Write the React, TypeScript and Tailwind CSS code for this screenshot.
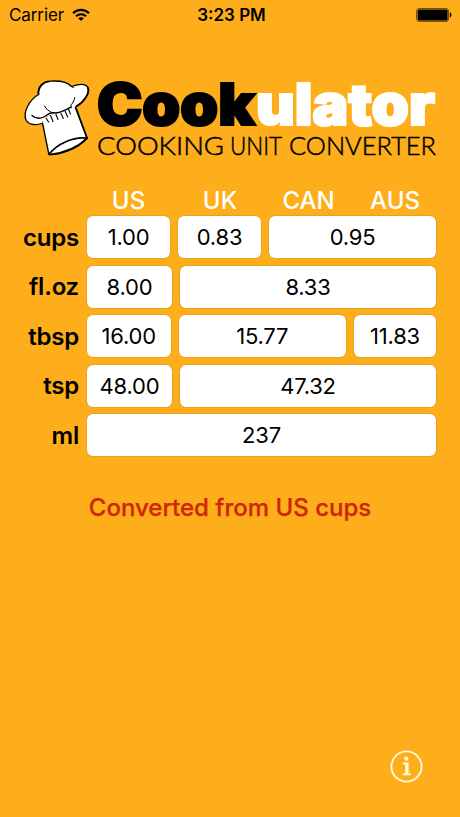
import React from "react";

type Cell = { value: string; width: string };
type Row = { label: string; cells: Cell[] };

const rows: Row[] = [
  {
    label: "cups",
    cells: [
      { value: "1.00", width: "w-[83px]" },
      { value: "0.83", width: "w-[83px]" },
      { value: "0.95", width: "flex-1" },
    ],
  },
  {
    label: "fl.oz",
    cells: [
      { value: "8.00", width: "w-[85px]" },
      { value: "8.33", width: "flex-1" },
    ],
  },
  {
    label: "tbsp",
    cells: [
      { value: "16.00", width: "w-[83.5px]" },
      { value: "15.77", width: "flex-1" },
      { value: "11.83", width: "w-[82px]" },
    ],
  },
  {
    label: "tsp",
    cells: [
      { value: "48.00", width: "w-[85px]" },
      { value: "47.32", width: "flex-1" },
    ],
  },
  {
    label: "ml",
    cells: [{ value: "237", width: "flex-1" }],
  },
];

function StatusBar() {
  return (
    <header className="grid h-[30px] grid-cols-3 items-center pl-[9px] pr-[8px] text-[17px] leading-[30px]">
      <div className="flex items-center gap-[8px]">
        <span className="tracking-[-0.1px]">Carrier</span>
        <svg width="18" height="14" viewBox="0 0 18 14" fill="none" stroke="#000" strokeWidth="2.1">
          <path d="M1 5.2C5.5.7 12.5.7 17 5.2" />
          <path d="M4 8.3c2.8-2.8 7.2-2.8 10 0" />
          <path d="M9 13 6.2 10.3c1.5-1.5 4.1-1.5 5.6 0Z" fill="#000" stroke="none" />
        </svg>
      </div>
      <span className="pl-[2px] text-center font-semibold">3:23 PM</span>
      <svg className="justify-self-end" width="36" height="14" viewBox="0 0 36 14">
        <rect x="0.6" y="0.6" width="32" height="12.8" rx="2.6" fill="none" stroke="#000" strokeOpacity=".6" />
        <rect x="1.6" y="1.6" width="30" height="10.8" rx="1.5" />
        <path d="M33.8 4.6c2.2.6 2.2 4.2 0 4.8Z" />
      </svg>
    </header>
  );
}

function Logo() {
  return (
    <svg className="block" width="460" height="95" viewBox="0 70 460 95" role="img" aria-label="Cookulator">
      <g strokeLinecap="round" strokeLinejoin="round" stroke="#000" fill="none">
        <path d="M41.5 118 48.9 154.5C60 155 76 150 87 138.2L74.5 105Z" fill="#fff" strokeWidth="1.3" />
        <path
          d="M42 123.5C36 125.5 29 125 26.2 120.5C22.5 113 29 100 38.5 94.5C37 87 43 81.5 50 81.2C58 80.6 67 81.5 71.5 86.5C77 84.5 84 82.5 87.3 86.5C91 92 84.5 102 75.5 106.5C70 111 62 115 53 114.5C48 115.5 43.5 118 42 123.5Z"
          fill="#fff"
          stroke="none"
        />
        <path d="M42 123.5C36 125.5 29 125 26.2 120.5C22.5 113 29 100 38.5 94.5C37 87 43 81.5 50 81.2C58 80.6 67 81.5 71.5 86.5C77 84.5 84 82.5 87.3 86.5C91 92 84.5 102 76.5 106.5" strokeWidth="1.3" />
        <path d="M87.8 87.5C90.3 93 84 101.5 76.5 106.3M49 81.5C43 82 38 87 38.5 94" strokeWidth="1.7" />
        <path d="M32 115.5C36 119 41 119 45.5 116C48 114 50 112.5 53.5 112.8C60 114 66 109 71.5 107" strokeWidth="1.5" />
        <path d="M44.500 106C46 109 49 111.500 53 113M74.800 97.500C74 101 72.500 103.500 70.500 106M71.500 86.500L73.500 87.500" strokeWidth="1" />
        <path d="m46 118 2.600 4M50.500 115.500l2.500 6M56 114.500l2 5M61 113.500l2.300 5M65 111l2.700 6M68.500 109l2 5" strokeWidth="1.100" />
        <path d="M49.500 153.800C57 144 73 136.500 87 138.200" strokeWidth="1.700" />
        <path d="M76 108 87.200 138.200C77 148 64 153 50 154.500" strokeWidth="1.600" />
      </g>
      <g className="font-[Inter] font-black" fontSize="57.5" strokeLinejoin="miter">
        <text x="97" y="125.2" textLength="158" lengthAdjust="spacingAndGlyphs" stroke="#000" strokeWidth="2.2">Cook</text>
        <text x="256" y="125.2" textLength="179" lengthAdjust="spacingAndGlyphs" fill="#fff" stroke="#fff" strokeWidth="2.2">ulator</text>
      </g>
      <g className="font-[Lato] font-light" fontSize="25.5" stroke="#000" strokeWidth="0.5">
        <text x="97" y="155" textLength="127" lengthAdjust="spacingAndGlyphs">COOKING</text>
        <text x="230" y="155" textLength="52" lengthAdjust="spacingAndGlyphs">UNIT</text>
        <text x="289" y="155" textLength="147" lengthAdjust="spacingAndGlyphs">CONVERTER</text>
      </g>
    </svg>
  );
}

export default function App() {
  return (
    <main className="flex h-[817px] w-[460px] flex-col overflow-hidden bg-[#fdae1a] font-[Inter,sans-serif] text-black">
      <StatusBar />
      <div className="h-10" />
      <Logo />
      <section className="mt-[21px] pl-[10px] pr-[24px]">
        <div className="grid h-[30px] grid-cols-[83px_100px_77px_96px] pl-[77px] text-center text-[24px] font-medium leading-[30px] text-white">
          <span>US</span>
          <span>UK</span>
          <span>CAN</span>
          <span>AUS</span>
        </div>
        <div className="flex flex-col gap-[7.5px]">
          {rows.map((row) => (
            <div key={row.label} className="flex h-[42px] items-center">
              <span className="w-[69px] pt-px text-right text-[24px] font-semibold leading-[42px] tracking-[-0.2px]">
                {row.label}
              </span>
              <div className="ml-2 flex h-full flex-1 gap-2">
                {row.cells.map((cell) => (
                  <div
                    key={cell.value}
                    className={`flex items-center justify-center rounded-[6px] bg-white pt-px text-[22px] tracking-[-0.2px] shadow-[0_0_0_0.5px_rgba(160,130,70,0.5)] ${cell.width}`}
                  >
                    {cell.value}
                  </div>
                ))}
              </div>
            </div>
          ))}
        </div>
      </section>
      <p className="mt-[36px] text-center text-[24px] font-medium leading-[32px] text-[#cf2509] [-webkit-text-stroke:0.25px_#cf2509]">
        Converted from US cups
      </p>
      <footer className="mt-auto flex justify-end pb-[34px] pr-[37px]">
        <button aria-label="Info">
          <svg width="33" height="33" viewBox="0 0 33 33" fill="none">
            <circle cx="16.5" cy="16.5" r="15.1" stroke="#fffbdc" strokeWidth="1.9" />
            <circle cx="16.3" cy="8.6" r="2.2" fill="#fffbdc" />
            <path d="M12.7 12.6H18.6V23.4H21V25.2H12.7V23.4H15.1V14.4H12.7Z" fill="#fffbdc" />
          </svg>
        </button>
      </footer>
    </main>
  );
}
